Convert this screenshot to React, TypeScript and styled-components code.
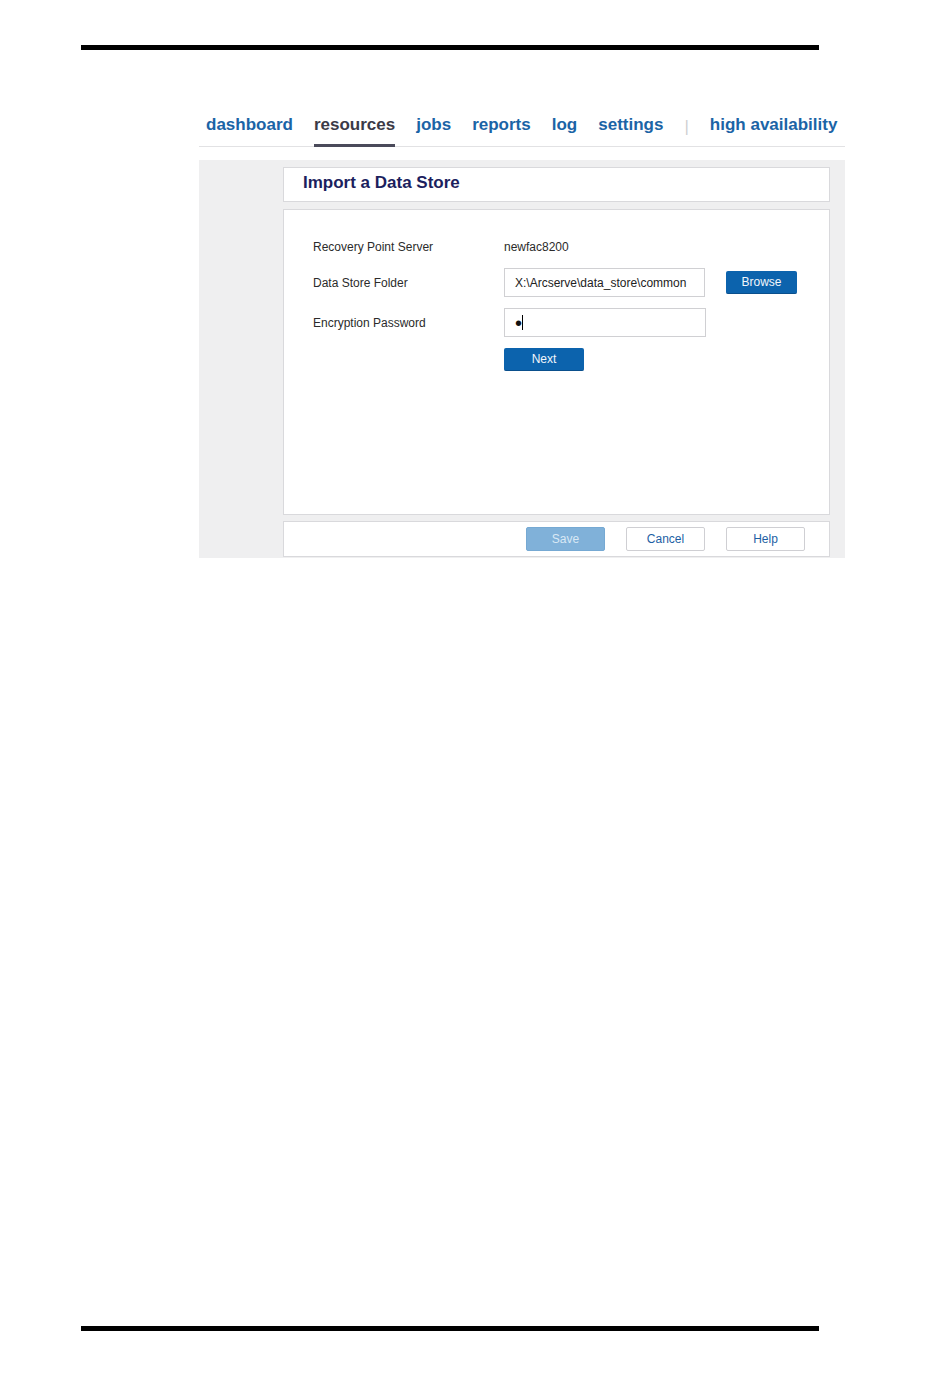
import styled, { createGlobalStyle } from 'styled-components';

const GlobalStyle = createGlobalStyle`
  body {
    margin: 0;
    background: #ffffff;
    font-family: "Liberation Sans", Arial, sans-serif;
  }
`;

const navItems = ['dashboard', 'resources', 'jobs', 'reports', 'log', 'settings'];

export default function App() {
  return (
    <Page>
      <GlobalStyle />
      <Rule />
      <Screen>
        <Nav>
          {navItems.map((item) => (
            <NavItem key={item} $active={item === 'resources'}>{item}</NavItem>
          ))}
          <NavDivider>|</NavDivider>
          <NavItem>high availability</NavItem>
        </Nav>
        <Panel>
          <TitleBox>
            <Title>Import a Data Store</Title>
          </TitleBox>
          <ContentBox>
            <Row $height={20}>
              <Label>Recovery Point Server</Label>
              <Value>newfac8200</Value>
            </Row>
            <Row $height={29}>
              <Label>Data Store Folder</Label>
              <Field>X:\Arcserve\data_store\common</Field>
              <PrimaryButton $width={71}>Browse</PrimaryButton>
            </Row>
            <Row $height={29}>
              <Label>Encryption Password</Label>
              <Field $width={202}>
                <Dot>•</Dot>
                <Caret />
              </Field>
            </Row>
            <Row $height={22}>
              <Label />
              <PrimaryButton $width={80}>Next</PrimaryButton>
            </Row>
          </ContentBox>
          <Footer>
            <DisabledButton>Save</DisabledButton>
            <PlainButton>Cancel</PlainButton>
            <PlainButton>Help</PlainButton>
          </Footer>
        </Panel>
      </Screen>
      <BottomRule />
    </Page>
  );
}

const Page = styled.div`
  display: flex;
  flex-direction: column;
  height: 1378px;
  width: 950px;
  padding-top: 45px;
  box-sizing: border-box;
`;

const Rule = styled.div`
  margin-left: 81px;
  width: 738px;
  height: 5px;
  background: #000;
`;

const BottomRule = styled(Rule)`
  margin-top: auto;
  margin-bottom: 47px;
`;

const Screen = styled.div`
  margin-top: 65px;
  margin-left: 199px;
  width: 646px;
`;

const Nav = styled.nav`
  display: flex;
  gap: 21px;
  padding-left: 7px;
  border-bottom: 1px solid #e2e2e4;
`;

const NavItem = styled.div<{ $active?: boolean }>`
  font-size: 17px;
  font-weight: bold;
  line-height: 20px;
  padding-bottom: 9px;
  margin-bottom: -1px;
  color: ${(p) => (p.$active ? '#3b3a47' : '#1b64a6')};
  border-bottom: 3px solid ${(p) => (p.$active ? '#4a4a5a' : 'transparent')};
  white-space: nowrap;
`;

const NavDivider = styled.div`
  font-size: 17px;
  line-height: 20px;
  color: #cfcfd2;
  padding-top: 2px;
`;

const Panel = styled.div`
  margin-top: 13px;
  background: #efeff0;
  padding: 7px 15px 1px 84px;
  display: flex;
  flex-direction: column;
  gap: 6px;
`;

const Box = styled.div`
  background: #fff;
  border: 1px solid #d9d9dc;
  box-sizing: border-box;
`;

const TitleBox = styled(Box)`
  height: 35px;
  display: flex;
  align-items: center;
  padding: 0 0 3px 19px;
  margin-bottom: 1px;
`;

const Title = styled.h1`
  margin: 0;
  font-size: 17px;
  font-weight: bold;
  color: #1c1f5e;
`;

const ContentBox = styled(Box)`
  height: 306px;
  padding: 27px 0 0 29px;
  display: flex;
  flex-direction: column;
  gap: 11px;
`;

const Row = styled.div<{ $height: number }>`
  display: flex;
  align-items: center;
  height: ${(p) => p.$height}px;
`;

const Label = styled.div`
  width: 191px;
  flex-shrink: 0;
  font-size: 12px;
  color: #2b2b2b;
`;

const Value = styled.div`
  font-size: 12px;
  color: #2b2b2b;
`;

const Field = styled.div<{ $width?: number }>`
  width: ${(p) => p.$width ?? 201}px;
  height: 29px;
  box-sizing: border-box;
  border: 1px solid #d0d0d3;
  background: #fff;
  padding-left: 10px;
  display: flex;
  align-items: center;
  font-size: 12px;
  color: #222;
  margin-right: 21px;
  white-space: nowrap;
  overflow: hidden;
`;

const Dot = styled.span`
  font-size: 20px;
  line-height: 1;
  color: #111;
`;

const Caret = styled.span`
  display: inline-block;
  width: 1px;
  height: 15px;
  background: #000;
`;

const PrimaryButton = styled.button<{ $width: number }>`
  width: ${(p) => p.$width}px;
  height: 23px;
  padding: 0;
  border: none;
  border-bottom: 1px solid #0a4f8c;
  border-radius: 2px;
  background: #0c63ad;
  color: #f2f6fb;
  font-family: "Liberation Sans", Arial, sans-serif;
  font-size: 12px;
`;

const Footer = styled(Box)`
  height: 36px;
  display: flex;
  justify-content: flex-end;
  align-items: flex-start;
  gap: 21px;
  padding: 5px 24px 0 0;
`;

const FooterButton = styled.button`
  width: 79px;
  height: 24px;
  padding: 0;
  border-radius: 2px;
  font-family: "Liberation Sans", Arial, sans-serif;
  font-size: 12px;
`;

const DisabledButton = styled(FooterButton)`
  border: 1px solid #76a9d3;
  background: #80b1d9;
  color: #d9e8f5;
`;

const PlainButton = styled(FooterButton)`
  border: 1px solid #cfcfd3;
  background: #fff;
  color: #1d5fa4;
`;
